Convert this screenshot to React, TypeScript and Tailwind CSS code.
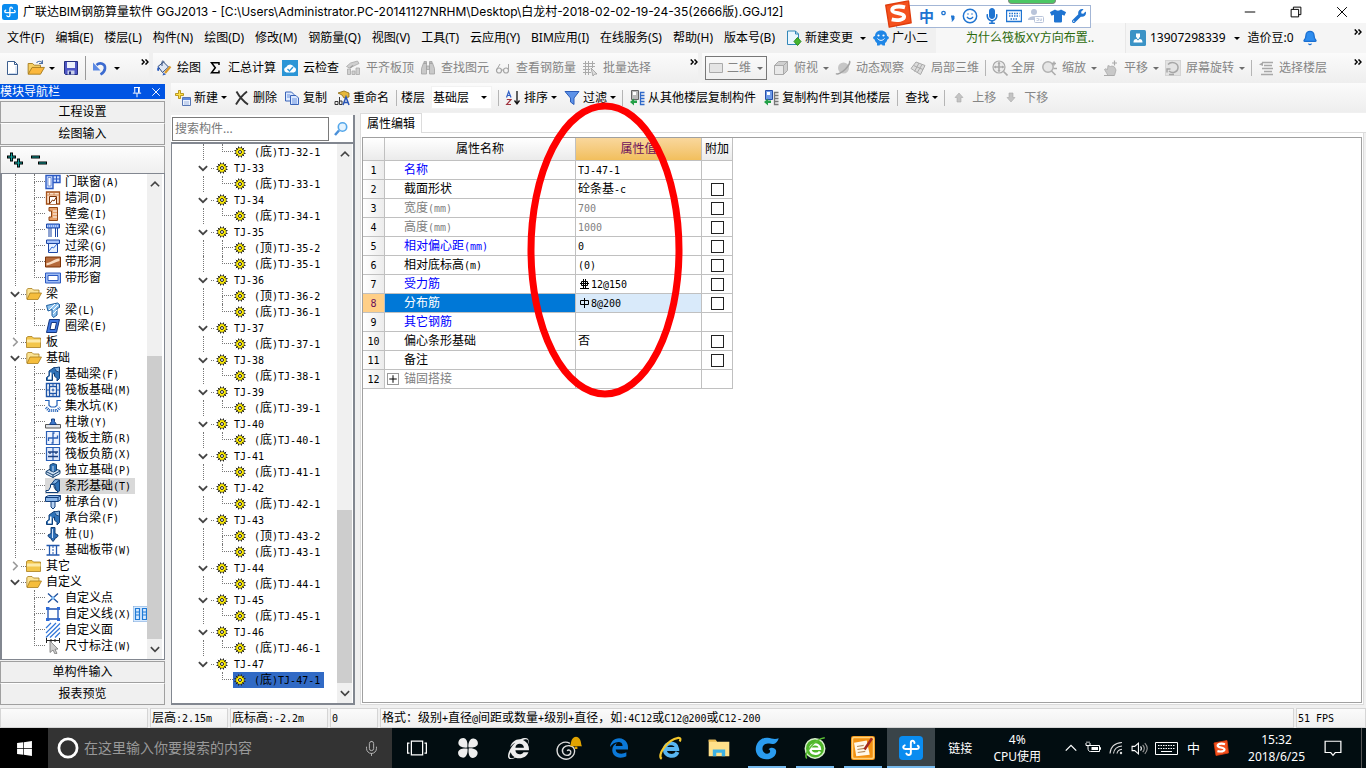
import { Fragment, type ReactNode } from 'react';
import { Bell, Mic, Smile } from 'lucide-react';
import { FaEdgeLegacy, FaInternetExplorer, FaMicrophone, FaTshirt, FaWindows, FaWrench } from 'react-icons/fa';
import clsx from 'clsx';

/* ---------- small drawing helpers ---------- */

const Ico = ({ children, className = 'w-4 h-4' }: { children: ReactNode; className?: string }) => (
  <svg viewBox="0 0 16 16" fill="none" className={clsx('shrink-0', className)} aria-hidden="true">
    {children}
  </svg>
);

const Caret = ({ dim = false }: { dim?: boolean }) => (
  <svg viewBox="0 0 6 3" className="w-1.5 h-[3px] shrink-0" aria-hidden="true">
    <path d="M0 0h6L3 3z" fill={dim ? '#6d6d6d' : '#000'} />
  </svg>
);

const More = () => (
  <svg viewBox="0 0 8 6" className="w-2 h-1.5 shrink-0 mb-3" fill="none" stroke="#000" strokeWidth="1.4" aria-hidden="true">
    <path d="M.7.4 3.2 3 .7 5.6M4.5.4 7 3 4.5 5.6" />
  </svg>
);

const Sep = ({ className = '' }: { className?: string }) => <span className={clsx('w-px h-4 bg-[#b5b5b5] shrink-0', className)} />;

// Latin runs are set half as wide as the Chinese characters
const Mono = ({ text }: { text: string }) => (
  <>
    {text.split(/([\x20-\x7e]+)/).map((part, i) =>
      i % 2 ? (
        <span key={i} className="font-['DejaVu_Sans_Mono',monospace] text-[10px] leading-none whitespace-pre">{part}</span>
      ) : (
        <Fragment key={i}>{part}</Fragment>
      ),
    )}
  </>
);

/* ---------- icons ---------- */

const AppLogo = ({ className }: { className: string }) => (
  <Ico className={className}>
    <rect width="16" height="16" rx="2.5" fill="#0a8cf0" />
    <path d="M10.300 4.600C10.300 2.700 7.900 2.700 7.900 4.600v6.600c0 1.700-2.200 1.900-3 .5M3.800 6.200C2.300 6.700 2.500 8.700 4.200 8.700h7.600c1.700 0 1.800-1.700.7-2.200" stroke="#fff" strokeWidth="1.300" strokeLinecap="round" />
  </Ico>
);

const Sogou = ({ className }: { className: string }) => (
  <Ico className={className}>
    <path d="M1 3 14 .5 15.500 13 3 15.500z" fill="#f4511e" stroke="#e03c0c" strokeWidth=".8" strokeLinejoin="round" />
    <path d="M12 4.200C8 3.100 4.500 3.900 4.700 5.900c.2 2 6.700 1.300 6.800 3.500.1 2-3.700 2.600-7.100 1.700" stroke="#fff" strokeWidth="2.200" />
  </Ico>
);

const icons: Record<string, ReactNode> = {
  newDoc: <><path d="M2.500 1.500h7l3 3v10h-10z" fill="#fff" stroke="#3d5f8f" /><path d="M9.500 1.500v3h3" stroke="#3d5f8f" /><path d="M11 6v8M4 13.500h8" stroke="#c7d7ee" /></>,
  open: <><path d="M1 13V4h4l1.500 1.500H12V8" fill="#f6cf63" stroke="#a67a1c" strokeWidth=".8" /><path d="M1 13.500 4.500 7.500H15.500L12 13.500z" fill="#fbb83e" stroke="#a67a1c" strokeWidth=".8" /><path d="M8.500 3.500C10 1.500 12 1.500 13.500 3.500M13.700 1v3h-3" stroke="#4b6fa5" /></>,
  save: <><path d="M1.500 1.500h13v13h-12l-1-1z" fill="#4f57c5" stroke="#26307f" /><path d="M4 2h8v6H4z" fill="#eef2fb" /><path d="M4.500 10.500h7v4h-7z" fill="#c9d1ea" /><path d="M6 11.500h2v3H6z" fill="#26307f" /></>,
  undo: <><path d="M4.500 5C8 2 13.500 3.500 13 8.500c-.2 2.500-2 4.500-4.500 6" stroke="#3c6bd0" strokeWidth="2.600" /><path d="M1 2.500v8h7.500z" fill="#5c8ae4" /></>,
  paint: <><path d="M2 6.500 7.500 2l5 5-6 5.500z" fill="#dfe7f5" stroke="#2f4a7c" /><path d="M6 6V1.500c1-1 2-.5 2 1" stroke="#2f4a7c" /><path d="M2 7c-1.500 2-.8 4 .2 4s1.500-1.500.5-4" fill="#2f5fc0" /><path d="M14.500 6.500 9 13" stroke="#d99a2a" strokeWidth="2.200" /><path d="m6.500 15.500 1-3 2.500 2z" fill="#2f5fc0" /></>,
  sigma: <path d="M12 5V2.700H4.500L8.300 7.700 4.500 12.800H12V10.500" stroke="#000" strokeWidth="1.500" />,
  cloudCheck: <><rect width="16" height="16" fill="#2b95d6" /><path d="M4.500 12.500a2.800 2.800 0 0 1-.2-5.500 4 4 0 0 1 7.500 0 2.800 2.800 0 0 1 0 5.500z" fill="#fff" /><path d="m5.500 9 2 2 3.500-4" stroke="#2b95d6" strokeWidth="1.400" /></>,
  align: <><path d="m1.500 6.500 4-3.500 7-2L14 3.500 4.500 8zM2.500 9h3v5.500h-3zM7 11h3v3.500H7zM11 8h3.500v6.500H11z" fill="#d0d0d0" stroke="#a8a8a8" strokeWidth=".8" /><path d="M5 8 8 5.500" stroke="#a0a0a0" strokeWidth="1.500" /></>,
  binoculars: <><path d="M1.500 14V8.500L3.500 3h3v11zM9.500 14V3h3l2 5.500V14zM6.500 6h3v3.500h-3zM4 1.500h2.500v2H4zM9.500 1.500H12v2H9.500z" fill="#c9c9c9" stroke="#a2a2a2" strokeWidth=".8" /></>,
  glasses: <><circle cx="4" cy="10.500" r="2.500" stroke="#a4a4a4" strokeWidth="1.200" /><circle cx="11" cy="10.500" r="2.500" stroke="#a4a4a4" strokeWidth="1.200" /><path d="M6.500 10h2M1.500 10 5 4M13.500 10V4" stroke="#a4a4a4" /></>,
  batch: <><path d="M1 3.500h12M1 6.500h12M1 9.500h7M1 12.500h8M3.500 1v14M6.500 1v14M10.500 1v7" stroke="#aaa" /><path d="m9 8 6 6-2.500.2L11 16z" fill="#ddd" stroke="#999" strokeWidth=".8" /></>,
  rect: <path d="M1.500 3.500h13v9h-13z" fill="#e4e4e4" stroke="#aaa" />,
  cube: <><path d="M1.500 5.500h9v9h-9z" fill="#e9e9e9" stroke="#aaa" /><path d="m1.500 5.500 4-4h9l-4 4zM10.500 14.500l4-4v-9l-4 4z" fill="#cfcfcf" stroke="#aaa" /></>,
  orbit: <><circle cx="8.500" cy="8" r="5.500" fill="#c6c6c6" /><path d="M1 13.500c1.500 1.500 6-1 9.500-4.500s5-7 3.800-8" stroke="#a2a2a2" strokeWidth="1.600" /></>,
  part3d: <><path d="m1 8.500 5-6.500 9 3.500-4.500 9z" fill="#dcdcdc" stroke="#aaa" /><path d="m3.500 5.500 9.500 4M9 3l-4.500 8.500M12 4.500l-5 8.500" stroke="#aaa" /></>,
  zoomFit: <><circle cx="7" cy="7" r="6" fill="#ececec" stroke="#aaa" strokeWidth="1.200" /><path d="M7 2.500v9M2.500 7h9M11.500 11.500l4 4" stroke="#aaa" strokeWidth="1.600" /><path d="M7 1.500 8.500 4h-3zM7 12.500 8.500 10h-3zM1.500 7 4 5.500v3zM12.500 7 10 5.500v3z" fill="#aaa" /></>,
  zoom: <><circle cx="7" cy="7" r="5.200" fill="#e6e6e6" stroke="#b1b1b1" strokeWidth="1.500" /><path d="m10.500 11 4 4M13 1.500v4M11 3.500h4M12.500 8.500H16" stroke="#aaa" strokeWidth="1.500" /></>,
  pan: <><path d="M1.500 9.500c1-1.500 2 0 3 0L5 5.500l2.500 1L9 6l2.500 1 1.500 3-1.500 5.500H5z" fill="#c8c8c8" stroke="#aaa" strokeWidth=".8" /><path d="M11.500.5v5M9 3h5M1 15.500h10" stroke="#aaa" strokeWidth="1.200" /></>,
  rotate: <><rect x=".5" y=".5" width="15" height="15" fill="#e3e3e3" stroke="#d4d4d4" /><path d="M3 4.500c3.500-4 10.500-1.500 10 3.500-.5 4.500-6 6-9 3M2 12.500V9h3.500M4 14.500h5" stroke="#a6a6a6" strokeWidth="1.500" /></>,
  floors: <><path d="M4 2.500h11M6 5.500h8M4 8.500h11M6 11.500h8M3 14.500h12" stroke="#a8a8a8" strokeWidth="1.400" /><path d="M1 4.500 5 2v4z" fill="#a8a8a8" /></>,
  create: <><path d="M7.500 7.500h8v8h-8z" fill="#eef4ff" stroke="#5877b5" /><path d="M8 8h7v2H8z" fill="#5f8be0" /><path d="M9 12h5M9 14h5" stroke="#9db3dc" /><path d="M3.500.5h2v3h3v2h-3v3h-2v-3h-3v-2h3z" fill="#ffe04a" stroke="#a98400" strokeWidth=".8" /></>,
  del: <path d="M2.500 1.500C5 6 9 11 14 14.500M13 1.500C8.500 5 5 9.500 2 14.500" stroke="#333" strokeWidth="1.900" />,
  copy: <><path d="M1.500 2h6L10 4.500V11H1.500z" fill="#dce9ff" stroke="#3a64b8" /><path d="M6.500 5.500H12L14.500 8v6.500h-8z" fill="#dce9ff" stroke="#3a64b8" /><path d="M8 9h5M8 11h5M8 13h5M3 5h3M3 7h3" stroke="#6c93de" /></>,
  rename: <><path d="m4 3 6-2 5 2v4l-5 1-2-3z" fill="#e5b73b" stroke="#8b6a12" strokeWidth=".8" /><path d="M1 14.500v-3h3v3H1M5.500 7v7.500h2.500v-3.500H5.500" stroke="#222" strokeWidth=".9" /><path d="m9 15 3-8 3 8M10 12.500h4" stroke="#2955b5" strokeWidth="1.500" /></>,
  funnel: <path d="M1 1.500h14L10 8v6.500L6.500 12V8z" fill="#5d92e8" stroke="#2c5cb8" />,
  sort: <><path d="m1.500 7.500 2.200-6 2.300 6M2.300 5.500h3" stroke="#2f5fc5" strokeWidth="1.200" /><path d="M1.800 9.500H6l-4.300 5H6" stroke="#a1343e" strokeWidth="1.200" /><path d="M12 1v12M9.500 10.500l2.500 3.500 2.500-3.500" stroke="#111" strokeWidth="1.300" /></>,
  copyFrom: <><path d="M2.500.5h7v9h-7z" fill="#bbb" stroke="#666" /><path d="M4 2h3v3H4z" fill="#fff" /><path d="M15.500 2.500h-4v12h4M11.500 5.500h4M11.500 8.500h4M11.500 11.500h4" stroke="#2f69c9" strokeWidth="1.300" /><path d="M8 10.500H5V8.500L1 12l4 3.500V13h3z" fill="#23a047" /></>,
  copyTo: <><path d="M2.500.5h7v9h-7z" fill="#6f9be8" stroke="#2850a8" /><path d="M4 2h3v3H4z" fill="#fff" /><path d="M15.500 2.500h-4v12h4M11.500 5.500h4M11.500 8.500h4M11.500 11.500h4" stroke="#777" strokeWidth="1.300" /><path d="M8 10.500H5V8.500L1 12l4 3.500V13h3z" fill="#23a047" /></>,
  up: <path d="m8 3 4 4.500h-2V12H6V7.500H4z" fill="#c4c4c4" stroke="#aaa" strokeWidth=".6" />,
  down: <path d="m8 12 4-4.500h-2V3H6v4.500H4z" fill="#c4c4c4" stroke="#aaa" strokeWidth=".6" />,
  change: <><path d="M1.500 1h8l3 3v10.500h-11z" fill="#eaf6ff" stroke="#3187b8" /><path d="M9.500 1v3h3" stroke="#3187b8" /><path d="m11.500 7.500 3.500 4-3.500 4-3.500-4z" fill="#46b52f" stroke="#2b8a1c" /></>,
  mascot: <><path d="M8 .5c4 0 6 2.500 6 5.500 2.500.5 2.500 3 .3 3.500-.3 2-1.300 3-2.300 3.500v2.500H9.500l-.5-1H7l-.5 1H4V13c-1-.5-2-1.500-2.300-3.500C-.5 9-.5 6.500 2 6 2 3 4 .5 8 .5z" fill="#1f86e6" /><circle cx="5.500" cy="5.500" r="1.100" fill="#fff" /><circle cx="10.500" cy="5.500" r="1.100" fill="#fff" /><path d="M4.500 8.500c2 2.500 5 2.500 7 0" stroke="#fff" /></>,
  user: <><rect width="16" height="16" rx="1.500" fill="#3b93c6" /><path d="M6 3.500h4v3L8.500 9h-1L6 6.500z" fill="#fff" /><path d="M3.500 12.500c0-3 1.500-3.500 3-3.500L8 10.500 9.500 9c1.500 0 3 .5 3 3.500z" fill="#fff" /></>,

  folder: <><path d="M.5 13.500V3.500L2 2.500h4l1.500 1.500h7v9.500z" fill="#f3c64b" stroke="#a87d1d" strokeWidth=".8" /><path d="M1 5.500h13.500v3H1z" fill="#fdeaa8" /></>,
  folderOpen: <><path d="M.8 13V3.500L2 2.500h4L7.500 4H13v3" fill="#fbe394" stroke="#a87d1d" strokeWidth=".8" /><path d="M1 13.500 4 7h11.500L12 13.500z" fill="#f5bd3c" stroke="#a87d1d" strokeWidth=".8" /></>,
  doorWin: <><path d="M1 1.500h7v13H1zM8 1.500h7v7H8z" fill="#cfe0ff" stroke="#2b59c2" strokeWidth="1.400" /><path d="M3 3.500h3v8.500H3z" fill="#fff" stroke="#2b59c2" strokeWidth=".6" /><path d="M11.500 2v6M8 5h7" stroke="#2b59c2" /></>,
  wallHole: <><path d="M1.500 2h13v12h-13z" fill="#fbe0c8" stroke="#a34e16" strokeWidth="1.300" /><path d="M1.500 5h13M4.500 2v3M9 2v3" stroke="#c9793f" strokeWidth=".8" /><path d="M4.500 14V6.500h7V14" fill="#fff" stroke="#7a3206" /><path d="m4.500 14 3-4 1.500 1 2.500-4" stroke="#7a3206" /></>,
  niche: <><path d="M4 1.500h8.500v13H4V11h2.500V5H4z" fill="#e6a06a" stroke="#8f4413" /><path d="M8 5h4M8 8h4M8 11h4" stroke="#fff" /></>,
  linkBeam: <><path d="M1.500 2h13v4h-13z" fill="#6e9af0" stroke="#1d47a5" /><path d="M4 6v9M6 6v9M10.500 6v9M12.500 6v9" stroke="#1d47a5" /><path d="M2 4h12" stroke="#fff" strokeDasharray="1 1" /></>,
  lintel: <><path d="M1.500 2h13v3.500h-13z" fill="#a7c3fa" stroke="#1d47a5" /><path d="M3.500 5.500h9v9h-9z" fill="#e7f0ff" stroke="#1d47a5" /><path d="m4 13 3-4 1.500 1 3.500-4" stroke="#2f6bd8" /></>,
  bandHole: <><path d="M.5 3h15v10H.5z" fill="#b5693a" stroke="#7a3206" /><path d="M1.500 9C6 8.500 9 5 14.500 4.500V7c-4 1-8 3.500-13 4.500z" fill="#f8dcc2" /></>,
  bandWin: <><path d="M.5 3h15v10H.5z" fill="#9dbcf5" stroke="#2b59c2" /><path d="M3 5.500h10v5H3z" fill="#fff" stroke="#2b59c2" /></>,
  beam: <><path d="M1.500 3.500 12.500 1l2 1.500v3L12 6.500V13l-3.500 2.500-1.500-2V7.500L3 9z" fill="#8ec3ee" stroke="#1c5d9e" /><path d="m4 8 6-6M8 8l5-5M8 12l4-4" stroke="#fff" /></>,
  ring: <><path d="M4.500 1.500h10l-3 13h-10z" fill="#3f78e0" stroke="#12357f" /><path d="M6.500 4.500h5l-1.500 7H5z" fill="#fff" stroke="#12357f" /></>,
  fBeam: <><path d="M1.500 14.500v-3L4 9.500V5l5-3.500 2 .5v3l3.500 1v6.500L12 15v-2.500L9.500 10V7L7.500 8.500v6z" fill="#2e72b8" stroke="#103f78" /><path d="m9 2 5.500-1v5" fill="#7fb0e2" stroke="#103f78" /><path d="M3 13.500v-2l2-1.500V6.500h1.500v7z" fill="#fff" /></>,
  raft: <><path d="M1.500 1.500h13v13h-13zM4.500 4.500h7v7h-7z" stroke="#1e55a8" strokeWidth="1.400" /><path d="M4.500 1.500v3M8 1.500v3M11.500 1.500v3M4.500 11.500v3M8 11.500v3M11.500 11.500v3M1.500 8h3M11.500 8h3M6.500 8h3M8 6.500v3" stroke="#1e55a8" /></>,
  pit: <><path d="M0 2.500h4v5l2 1.500h4l2-1.500v-5h4" stroke="#2160b8" strokeWidth="1.200" /><path d="M1 9.500 4 12.500h8l3-3" stroke="#2160b8" strokeDasharray="1 1" strokeWidth="3" /></>,
  pier: <><path d="M.5 10.500h15V14H.5z" fill="#e2e5ea" stroke="#555" /><path d="m4.500 10.500 2-3V5h3v2.500l2 3z" fill="#3d78cc" stroke="#163f80" /></>,
  raftMain: <><path d="M1.500 1.500h13v13h-13z" fill="#edf3ff" stroke="#2a5fb5" strokeWidth="1.200" /><path d="M9.500 3H8v10H6.500M3.500 11V8h9V5.500" stroke="#2a5fb5" strokeWidth="1.300" /></>,
  raftNeg: <><path d="M1.500 1.500h13v13h-13zM8 1.500v13" fill="#dfe9fb" stroke="#2a5fb5" strokeWidth="1.200" /><path d="M3 6h10M3 10.500h10M5 6v2M11 6v2" stroke="#1b3f80" strokeWidth="1.300" /></>,
  isolated: <><path d="M1 9.500 7 6l8 2.500v3L8 15.500l-7-3.500z" fill="#cfe0f2" stroke="#14406f" /><path d="M1 9.500 8 13l7-4M8 13v2.500" stroke="#14406f" /><path d="M5 3 8 1.500l3.500 1v6L8.500 10 5 8.500z" fill="#2e72b8" stroke="#14406f" /><path d="M8 4v5.500" stroke="#cfe0f2" /></>,
  strip: <><path d="m6.500 6 3.500-4.500 4.500.5-3 4z" fill="#7fb0e2" stroke="#103f78" /><path d="M9.500 6.500 14.500 2v11L12 15z" fill="#2e72b8" stroke="#103f78" /><path d="M1 14.500v-2h2.500L5.500 9V6.500h3.500V9l2 3.500h1.500v2z" fill="#fff" stroke="#103f78" /></>,
  cap: <><path d="m.5 3 3-1.500h12V6l-2.500 1.500H.5z" fill="#8db8ea" stroke="#123f7c" /><path d="M.5 3.500h12.500l2.500-2M13 3.500v4" stroke="#123f7c" /><path d="M6 7.500h4V13l-2 2-2-2z" fill="#b7d2f2" stroke="#123f7c" /></>,
  pile: <><path d="M6 1.500h4v6l3 1.500c0 2-1.500 3-3 3v1l-2 2.500-2-2.500v-1C4.500 12 3 11 3 9l3-1.500z" fill="#2f6fb7" stroke="#133d72" /><path d="M7.500 3v9" stroke="#cfe3fb" /></>,
  slabBand: <><path d="M1.500 3.500h13M1.500 13h13" stroke="#2358ad" strokeWidth="1.500" /><path d="M4.500 4v9M11.500 4v9" stroke="#2358ad" strokeWidth="1.300" /><path d="M8 4v9" stroke="#2358ad" strokeDasharray="2 1" /></>,
  point: <><path d="m3 3.500 10 9M13 3.500l-10 9" stroke="#1d4f9c" strokeWidth="1.300" /><circle cx="8" cy="8" r="1.800" fill="#7db9f5" /></>,
  line: <><path d="M3 3h10v10H3z" stroke="#1c50b0" strokeWidth="1.300" /><path d="M1 1h3.500v3H1zM12 1h3v3h-3zM1 12h3.500v3H1zM12 12h3v3h-3z" fill="#2f6bd6" /></>,
  area: <path d="m1 6 5-5M1 11 11 1M1 15.500 15 1.500M5 15.500 15 6M10 15.500l5-5" stroke="#3276d8" strokeWidth="1.200" />,
  dim: <><path d="M1.500 0v5M14.500 0v5M1.500 2.500h13M6 1v3M10 1v3" stroke="#222" /><path d="m5 3 8 8-3 .3 2 4-2 .7-2-4-3 2.500z" fill="#ccc" stroke="#777" strokeWidth=".8" /></>,
};

const Icon = ({ name, className }: { name: string; className?: string }) => <Ico className={className}>{icons[name]}</Ico>;

const Gear = () => (
  <svg viewBox="0 0 12 12" className="w-3 h-3 shrink-0" aria-hidden="true">
    <path d="M4.500.5v11M7.500.5v11M.5 4.500h11M.5 7.500h11M1.900 1.900l8.200 8.200M10.100 1.900l-8.200 8.200" stroke="#222" strokeWidth="1" />
    <circle cx="6" cy="6" r="4.300" fill="#ffee00" stroke="#333" strokeWidth=".7" />
    <path d="M3 3h1v1H3zM8 3h1v1H8zM3 8h1v1H3zM8 8h1v1H8z" fill="#4d4700" />
    <circle cx="6" cy="6" r="1.500" fill="#fff" stroke="#222" strokeWidth="1" />
  </svg>
);

/* ---------- window chrome ---------- */

const menus = ['文件(F)', '编辑(E)', '楼层(L)', '构件(N)', '绘图(D)', '修改(M)', '钢筋量(Q)', '视图(V)', '工具(T)', '云应用(Y)', 'BIM应用(I)', '在线服务(S)', '帮助(H)', '版本号(B)'];

const TitleBar = () => (
  <header className="flex items-center h-[23px] bg-white pl-0.5 pr-[18px] shrink-0">
    <AppLogo className="w-4 h-4" />
    <h1 className="ml-[5px] flex-1 truncate font-['Inter','Noto_Sans_CJK_SC',sans-serif]">
      广联达BIM钢筋算量软件 GGJ2013 - [C:\Users\Administrator.PC-20141127NRHM\Desktop\白龙村-2018-02-02-19-24-35(2666版).GGJ12]
    </h1>
    <div className="flex items-center gap-[34px]">
      <button aria-label="最小化"><Ico className="w-3 h-3"><path d="M1 8h14" stroke="#000" strokeWidth="1.300" /></Ico></button>
      <button aria-label="还原"><Ico className="w-3 h-3"><path d="M1.500 4.500h10v10h-10zM4.500 4.500v-3h10v10h-3" stroke="#000" strokeWidth="1.300" /></Ico></button>
      <button aria-label="关闭"><Ico className="w-3 h-3"><path d="m1.500 1.500 13 13M14.500 1.500l-13 13" stroke="#000" strokeWidth="1.300" /></Ico></button>
    </div>
  </header>
);

const ImeBar = () => (
  <div className="absolute left-[884px] top-0 flex items-center">
    <span className="absolute left-[124px] top-0 w-12 h-1 rounded-b bg-[#4cc764] border border-t-0 border-[#7b8a7d]" />
    <Sogou className="w-7 h-7 relative z-10" />
    <div className="flex items-center gap-1.5 h-[23px] mt-1 -ml-4 pl-[22px] pr-1 bg-white border border-[#a3b6d6] text-[#1f74d1]">
      <span className="text-[15px] leading-none font-bold">中</span>
      <Ico className="w-4 h-4"><circle cx="3.500" cy="5" r="1.700" stroke="#1f74d1" strokeWidth="1.300" /><path d="M11 8h3v3l-2 2.500" fill="#1f74d1" stroke="#1f74d1" /></Ico>
      <Smile size={16} strokeWidth={2.200} />
      <FaMicrophone size={16} />
      <Ico className="w-4 h-4"><path d="M.5 2.500h15v11H.5z" stroke="#1f74d1" strokeWidth="1.400" /><path d="M3 5.500h10.500M3 8h10.500M4.500 11h7" stroke="#1f74d1" strokeWidth="1.400" strokeDasharray="1.500 1" /></Ico>
      <Ico className="w-4 h-4"><circle cx="6" cy="4" r="3" fill="#b9c4da" /><path d="M0 12c0-5 12-5 12 0z" fill="#b9c4da" /><rect x="6.500" y="8.500" width="9" height="6" rx="1" fill="#fff" stroke="#b9c4da" /><path d="M8.500 10.500h2v2h-2M12 10.500v2h1.500v-2" stroke="#b9c4da" strokeWidth=".8" /></Ico>
      <FaTshirt size={16} />
      <FaWrench size={14} />
    </div>
  </div>
);

const MenuBar = () => (
  <nav className="flex items-stretch h-[30px] shrink-0 bg-[#f0f0f0]">
    <div className="flex items-center gap-[11px] pl-[7px] w-[936px] whitespace-nowrap">
      {menus.map(m => <button key={m}>{m}</button>)}
      <button className="flex items-center gap-[3px]">
        <Icon name="change" />新建变更<span className="ml-1"><Caret /></span>
      </button>
      <button className="flex items-center gap-[3px] -ml-1"><Icon name="mascot" />广小二</button>
    </div>
    <div className="flex items-center flex-1 bg-[#f7f7f7] pl-[30px] min-w-0">
      <a href="#tip" className="text-[#2c6a0c] whitespace-nowrap">为什么筏板XY方向布置..</a>
    </div>
    <div className="flex items-center bg-[#f5f5f5] border-l border-[#e8e8e8] pl-1 pr-1 w-[241px] gap-1">
      <button className="flex items-center gap-1"><Icon name="user" />13907298339<span className="ml-1 mr-1"><Caret /></span></button>
      <button>造价豆:0</button>
      <button aria-label="消息"><Bell size={16} className="ml-1 fill-[#2e8def] text-[#1b6fd0]" /></button>
      <button className="ml-auto" aria-label="更多"><More /></button>
    </div>
  </nav>
);

type Tool = { icon: string; label: string; dim?: boolean; caret?: boolean; tight?: boolean };

const ToolButton = ({ icon, label, dim, caret, tight }: Tool) => (
  <button className={clsx('flex items-center whitespace-nowrap', tight ? 'gap-[3px]' : 'gap-[5px]', dim && 'text-[#858585]')}>
    <Icon name={icon} />
    {label}
    {caret && <Caret dim={dim} />}
  </button>
);

const strip = 'flex items-center bg-linear-to-b from-[#fbfbfb] to-[#eeeeee]';

const MainToolbar = () => (
  <div className="flex h-[30px] shrink-0 bg-[#f0f0f0] gap-1">
    <div className={clsx(strip, 'w-[149px] pl-[5px] gap-1.5')}>
      <button aria-label="新建"><Icon name="newDoc" /></button>
      <button aria-label="打开" className="flex items-center gap-1"><Icon name="open" className="w-[18px] h-[18px]" /><Caret /></button>
      <button aria-label="保存" className="ml-0.5"><Icon name="save" /></button>
      <span className="w-px h-6 bg-[#999]" />
      <button aria-label="撤销" className="flex items-center gap-1.5"><Icon name="undo" /><Caret /></button>
      <button className="ml-auto" aria-label="更多"><More /></button>
    </div>
    <div className={clsx(strip, 'w-[545px] pl-[3px] gap-1.5')}>
      <ToolButton icon="paint" label="绘图" />
      <ToolButton icon="sigma" label="汇总计算" />
      <ToolButton icon="cloudCheck" label="云检查" />
      <ToolButton icon="align" label="平齐板顶" dim />
      <ToolButton icon="binoculars" label="查找图元" dim />
      <ToolButton icon="glasses" label="查看钢筋量" dim />
      <ToolButton icon="batch" label="批量选择" dim />
      <button className="ml-auto" aria-label="更多"><More /></button>
    </div>
    <div className={clsx(strip, 'flex-1 pl-[3px] pr-1 gap-1.5')}>
      <label className="flex items-center w-[62px] h-6 border border-[#777] pl-0.5 gap-[3px] pr-[3px] text-[#858585]">
        <Icon name="rect" />
        <select aria-label="视图模式" className="appearance-none w-[30px] bg-transparent outline-none"><option>二维</option></select>
        <Caret dim />
      </label>
      <ToolButton icon="cube" label="俯视" dim caret />
      <ToolButton icon="orbit" label="动态观察" dim />
      <ToolButton icon="part3d" label="局部三维" dim />
      <Sep />
      <ToolButton icon="zoomFit" label="全屏" dim tight />
      <ToolButton icon="zoom" label="缩放" dim caret />
      <ToolButton icon="pan" label="平移" dim caret />
      <ToolButton icon="rotate" label="屏幕旋转" dim caret />
      <Sep />
      <ToolButton icon="floors" label="选择楼层" dim />
      <button className="ml-auto" aria-label="更多"><More /></button>
    </div>
  </div>
);

const ComponentToolbar = () => (
  <div className={clsx(strip, 'h-[29px] shrink-0 pl-1 gap-[7px]')}>
    <ToolButton icon="create" label="新建" caret tight />
    <ToolButton icon="del" label="删除" tight />
    <ToolButton icon="copy" label="复制" tight />
    <ToolButton icon="rename" label="重命名" tight />
    <label className="flex items-center gap-1">
      <Sep />
      楼层
      <span className="flex items-center w-[61px] h-[23px] bg-white border border-[#f2f2f2] pl-px pr-1 ml-0.5">
        <select className="appearance-none flex-1 bg-transparent outline-none"><option>基础层</option></select>
        <Caret />
      </span>
    </label>
    <Sep className="-mx-px" />
    <ToolButton icon="sort" label="排序" caret tight />
    <ToolButton icon="funnel" label="过滤" caret tight />
    <Sep className="-mx-px" />
    <ToolButton icon="copyFrom" label="从其他楼层复制构件" tight />
    <ToolButton icon="copyTo" label="复制构件到其他楼层" tight />
    <Sep />
    <button className="flex items-center gap-[3px]">查找<Caret /></button>
    <Sep className="-mx-px" />
    <ToolButton icon="up" label="上移" dim />
    <ToolButton icon="down" label="下移" dim />
  </div>
);

/* ---------- trees ---------- */

const Chevron = ({ open, className = '' }: { open: boolean; className?: string }) => (
  <Ico className={clsx('w-3 h-3', className)}>
    {open ? <path d="m2.500 5.500 5.500 5.500 5.500-5.500" stroke="#444" strokeWidth="2.400" /> : <path d="m5.500 2.500 5.500 5.500-5.500 5.500" stroke="#999" strokeWidth="2" />}
  </Ico>
);

const Elbow = ({ last }: { last: boolean }) => (
  <span className="w-[11px] h-4 shrink-0 flex flex-col">
    <span className="h-2 border-l border-b border-dotted border-[#777]" />
    <span className={clsx('h-2', !last && 'border-l border-dotted border-[#777]')} />
  </span>
);

const ScrollBar = ({ thumb }: { thumb: ReactNode }) => (
  <div className="w-[15px] shrink-0 bg-[#f0f0f0] flex flex-col items-center">
    <Ico className="w-3 h-4 my-0.5"><path d="m2.500 11 5.500-5.500 5.500 5.500" stroke="#444" strokeWidth="2.200" /></Ico>
    {thumb}
    <Ico className="w-3 h-4 my-0.5"><path d="m2.500 5.500 5.500 5.500 5.500-5.500" stroke="#444" strokeWidth="2.200" /></Ico>
  </div>
);

type NavNode = { label: string; icon: string; level: 0 | 1; open?: boolean; last?: boolean; tail?: boolean };

const navNodes: NavNode[] = [
  { label: '门联窗(A)', icon: 'doorWin', level: 1 },
  { label: '墙洞(D)', icon: 'wallHole', level: 1 },
  { label: '壁龛(I)', icon: 'niche', level: 1 },
  { label: '连梁(G)', icon: 'linkBeam', level: 1 },
  { label: '过梁(G)', icon: 'lintel', level: 1 },
  { label: '带形洞', icon: 'bandHole', level: 1 },
  { label: '带形窗', icon: 'bandWin', level: 1, last: true },
  { label: '梁', icon: 'folderOpen', level: 0, open: true },
  { label: '梁(L)', icon: 'beam', level: 1 },
  { label: '圈梁(E)', icon: 'ring', level: 1, last: true },
  { label: '板', icon: 'folder', level: 0 },
  { label: '基础', icon: 'folderOpen', level: 0, open: true },
  { label: '基础梁(F)', icon: 'fBeam', level: 1 },
  { label: '筏板基础(M)', icon: 'raft', level: 1 },
  { label: '集水坑(K)', icon: 'pit', level: 1 },
  { label: '柱墩(Y)', icon: 'pier', level: 1 },
  { label: '筏板主筋(R)', icon: 'raftMain', level: 1 },
  { label: '筏板负筋(X)', icon: 'raftNeg', level: 1 },
  { label: '独立基础(P)', icon: 'isolated', level: 1 },
  { label: '条形基础(T)', icon: 'strip', level: 1 },
  { label: '桩承台(V)', icon: 'cap', level: 1 },
  { label: '承台梁(F)', icon: 'fBeam', level: 1 },
  { label: '桩(U)', icon: 'pile', level: 1 },
  { label: '基础板带(W)', icon: 'slabBand', level: 1, last: true },
  { label: '其它', icon: 'folder', level: 0 },
  { label: '自定义', icon: 'folderOpen', level: 0, open: true },
  { label: '自定义点', icon: 'point', level: 1, tail: true },
  { label: '自定义线(X)', icon: 'line', level: 1, tail: true },
  { label: '自定义面', icon: 'area', level: 1, tail: true },
  { label: '尺寸标注(W)', icon: 'dim', level: 1, tail: true, last: true },
];

const NavRow = ({ node }: { node: NavNode }) => {
  if (node.level === 0) {
    return (
      <li className="flex items-center h-4 pl-1.5">
        <Chevron open={!!node.open} />
        <span className="w-[5px] border-t border-dotted border-[#777]" />
        <Icon name={node.icon} />
        <span className="ml-1"><Mono text={node.label} /></span>
      </li>
    );
  }
  return (
    <li className="flex items-center h-4 pl-3">
      <span className={clsx('w-[19px] h-4 shrink-0', !node.tail && 'border-l border-dotted border-[#777]')} />
      <Elbow last={!!node.last} />
      <span className={clsx('flex items-center h-4 pr-1', node.label === '条形基础(T)' && 'bg-[#d9d9d9]')}>
        <Icon name={node.icon} />
        <span className="ml-1 whitespace-nowrap"><Mono text={node.label} /></span>
      </span>
      {node.label === '自定义线(X)' && (
        <Ico className="w-4 h-4 -ml-0.5"><rect width="16" height="16" fill="#d7eaff" stroke="#7da7d8" /><path d="M2.500 2.500h4v11h-4zM9.500 2.500h4v11h-4zM2.500 6h4M2.500 9h4M9.500 6h4M9.500 9h4" stroke="#1f7ad6" strokeWidth="1.200" /></Ico>
      )}
    </li>
  );
};

const panelButton = 'h-[22px] w-full bg-[#f0f0f0] border border-[#a0a0a0] shrink-0';

const NavPanel = () => (
  <aside className="w-[165px] shrink-0 flex flex-col">
    <div className="flex items-center h-[15px] bg-[#0054e3] text-white shrink-0 mt-px">
      <h2 className="flex-1 leading-none">模块导航栏</h2>
      <button aria-label="固定"><Ico className="w-3 h-3"><path d="M4 2h8M5 2v7M10 2v7M11 2v7M2.500 9.500h11M8 9.500V15" stroke="#fff" strokeWidth="1.300" /></Ico></button>
      <button aria-label="关闭" className="mx-1 ml-2"><Ico className="w-2.5 h-2.5"><path d="m2 2 12 12M14 2 2 14" stroke="#fff" strokeWidth="1.500" /></Ico></button>
    </div>
    <button className={clsx(panelButton, 'mt-0.5')}>工程设置</button>
    <button className={clsx(panelButton, 'border-t-white')}>绘图输入</button>
    <div className="flex items-center gap-2 h-[27px] pl-1.5 mt-px bg-linear-to-b from-[#fdfdfd] to-[#efefef] border border-b-0 border-[#a0a0a0] shrink-0">
      <button aria-label="全部展开"><Ico><path d="M4.500.5v9M0 5h9M11.500 6.500v9M7 11h9" stroke="#000" strokeWidth="3" /><path d="M4.500 1.500v7M1 5h7M11.500 7.500v7M8 11h7" stroke="#13a3a0" strokeWidth="1.200" /></Ico></button>
      <button aria-label="全部折叠"><Ico><path d="M0 5h9M7 11h9" stroke="#000" strokeWidth="3" /><path d="M1 5h7M8 11h7" stroke="#13a3a0" strokeWidth="1.200" /></Ico></button>
    </div>
    <div className="flex flex-1 min-h-0 bg-white border border-l-2 border-[#828790] pl-px pr-0.5">
      <ul className="flex-1 overflow-hidden min-w-0">
        {navNodes.map((n, i) => <NavRow key={i} node={n} />)}
      </ul>
      <ScrollBar thumb={<><span className="flex-4 w-full" /><span className="flex-7 w-full bg-[#cdcdcd]" /></>} />
    </div>
    <button className={clsx(panelButton, 'mt-px')}>单构件输入</button>
    <button className={clsx(panelButton, 'mb-0.5 border-t-white')}>报表预览</button>
  </aside>
);

// numbered beams; some have a top part as well as a bottom one
const groups = Array.from({ length: 15 }, (_, i) => {
  const id = 33 + i;
  const double = id === 35 || id === 36 || id === 43;
  return { id, parts: double ? [`(顶)TJ-${id}-2`, `(底)TJ-${id}-1`] : [`(底)TJ-${id}-1`] };
});

const PartRow = ({ label, last, tail, selected }: { label: string; last: boolean; tail?: boolean; selected?: boolean }) => (
  <li className="flex items-center h-4 pl-[31px]">
    <span className={clsx('w-[19px] h-4 shrink-0', !tail && 'border-l border-dotted border-[#777]')} />
    <Elbow last={last} />
    <span className={clsx('flex items-center h-4 pl-px pr-1', selected && 'bg-[#316ac5]')}>
      <Gear />
      <span className="ml-2 whitespace-nowrap"><Mono text={label} /></span>
    </span>
  </li>
);

const ComponentPanel = () => (
  <section className="w-[184px] shrink-0 flex flex-col border-r-2 border-[#828790] my-[3px] mb-0.5">
    <div className="flex h-[27px] bg-white items-center pl-px pt-px shrink-0">
      <input type="text" aria-label="搜索构件" placeholder="搜索构件..." className="w-[157px] h-6 border border-[#7a7a7a] pl-0.5 pb-0.5 outline-none placeholder:text-[#777]" />
      <button aria-label="搜索" className="ml-1">
        <Ico><path d="m2 14 4-4.500" stroke="#4a90d9" strokeWidth="2.500" /><circle cx="9.500" cy="6" r="4.200" fill="#e3f3ff" stroke="#55a7ea" strokeWidth="1.600" /></Ico>
      </button>
    </div>
    <div className="flex flex-1 min-h-0 bg-white border-t-2 border-b-2 border-l border-[#828790]">
      <ul className="flex-1 overflow-hidden">
        <PartRow label="(底)TJ-32-1" last />
        {groups.map(g => (
          <Fragment key={g.id}>
            <li className="flex items-center h-4 pl-[25px]">
              <Chevron open />
              <span className="w-[3px] ml-0.5 mr-0.5 border-t border-dotted border-[#777]" />
              <Gear />
              <span className="ml-1.5"><Mono text={`TJ-${g.id}`} /></span>
            </li>
            {g.parts.map((p, i) => (
              <PartRow key={p} label={p} last={i === g.parts.length - 1} tail={g.id === 47} selected={g.id === 47} />
            ))}
          </Fragment>
        ))}
      </ul>
      <ScrollBar thumb={<><span className="flex-2 w-full" /><span className="flex-1 w-full bg-[#cdcdcd]" /></>} />
      <span className="w-px" />
    </div>
  </section>
);

/* ---------- property editor ---------- */

type Prop = { name: string; value?: string; grade?: 'A' | 'C'; tone?: 'blue' | 'gray'; check?: boolean; expand?: boolean };

const props: Prop[] = [
  { name: '名称', value: 'TJ-47-1', tone: 'blue' },
  { name: '截面形状', value: '砼条基-c', check: true },
  { name: '宽度(mm)', value: '700', tone: 'gray', check: true },
  { name: '高度(mm)', value: '1000', tone: 'gray', check: true },
  { name: '相对偏心距(mm)', value: '0', tone: 'blue', check: true },
  { name: '相对底标高(m)', value: '(0)', check: true },
  { name: '受力筋', value: '12@150', grade: 'C', tone: 'blue', check: true },
  { name: '分布筋', value: '8@200', grade: 'A', check: true },
  { name: '其它钢筋', tone: 'blue' },
  { name: '偏心条形基础', value: '否', check: true },
  { name: '备注', check: true },
  { name: '锚固搭接', tone: 'gray', expand: true },
];

// steel grade mark in front of the diameter
const Grade = ({ grade }: { grade: 'A' | 'C' }) => (
  <svg viewBox="0 0 11 10" className="inline w-[11px] h-2.5 mx-px align-[-1px]" fill="none" stroke="#000" aria-hidden="true">
    {grade === 'A' ? (
      <path d="M5.500 0v10M1.500 2.500h8v4h-8z" />
    ) : (
      <path d="M4.500 0v9M6.500 0v9M2.500 2.500h6v4h-6zM1 9.500h9M1 4.500h9" />
    )}
  </svg>
);

const headCell = 'h-[23px] font-normal border-r border-b border-[#c0c0c0]';

const PropertyEditor = () => (
  <main className="flex-1 min-w-0 flex flex-col ml-[5px] pt-px">
    <div role="tablist" className="flex h-5 shrink-0 bg-white">
      <button role="tab" aria-selected="true" className="w-[62px] bg-white border border-b-0 border-[#dcdcdc]">属性编辑</button>
      <span className="flex-1 border-b border-[#dcdcdc]" />
    </div>
    <div className="flex-1 min-h-0 bg-white border border-t-0 border-[#dcdcdc] p-px pt-[4px] mr-0.5 mb-0.5">
      <div className="h-full border border-[#a0a0a0]">
        <table className="table-fixed border-separate border-spacing-0 w-[370px]">
          <colgroup>
            <col className="w-[22px]" />
            <col className="w-[191px]" />
            <col className="w-[126px]" />
            <col className="w-[31px]" />
          </colgroup>
          <thead>
            <tr>
              <th className={clsx(headCell, 'bg-linear-to-b from-white to-[#ebebeb]')} />
              <th className={clsx(headCell, 'bg-linear-to-b from-white to-[#ebebeb]')}>属性名称</th>
              <th className={clsx(headCell, 'bg-linear-to-b from-[#f9d79c] to-[#f2bf5c] text-[#6b0f5b]')}>属性值</th>
              <th className={clsx(headCell, 'bg-linear-to-b from-white to-[#ebebeb] whitespace-nowrap')}>附加</th>
            </tr>
          </thead>
          <tbody>
            {props.map((p, i) => {
              const active = p.name === '分布筋';
              return (
                <tr key={p.name} className="leading-[18px]">
                  <th className={clsx('h-[19px] p-0 font-normal border-r border-b border-[#c0c0c0]', active ? 'bg-[#ffcf87] text-[#6b0f5b]' : 'bg-linear-to-r from-white to-[#ececec]')}>
                    <Mono text={String(i + 1)} />
                  </th>
                  <td className={clsx('p-0 border-r border-b border-[#c0c0c0]', active && 'bg-[#0078d7] text-white', p.tone === 'blue' && 'text-[#0000ff]', p.tone === 'gray' && 'text-[#808080]')}>
                    <span className="flex items-center">
                      <span className="w-[19px] flex pl-0.5">
                        {p.expand && (
                          <button aria-label="展开" className="w-3 h-3 border border-[#999] flex items-center justify-center">
                            <Ico className="w-2.5 h-2.5"><path d="M8 2v12M2 8h12" stroke="#000" strokeWidth="1.600" /></Ico>
                          </button>
                        )}
                      </span>
                      <span><Mono text={p.name} /></span>
                    </span>
                  </td>
                  <td className={clsx('p-0 pl-0.5 border-r border-b border-[#c0c0c0]', active && 'bg-[#d9eafa]', p.tone === 'gray' && 'text-[#808080]')}>
                    {p.grade && <Grade grade={p.grade} />}
                    <Mono text={p.value ?? ''} />
                  </td>
                  <td className="p-0 border-r border-b border-[#c0c0c0]">
                    {p.check && <input type="checkbox" aria-label={`${p.name} 附加`} className="appearance-none block mx-auto size-[13px] border border-[#222] bg-white" />}
                  </td>
                </tr>
              );
            })}
          </tbody>
        </table>
      </div>
    </div>
  </main>
);

/* ---------- bottom bars ---------- */

const statusCell = 'border border-[#d5d5d5] bg-linear-to-b from-[#fbfbfb] to-[#f0f0f0] px-px leading-[18px] whitespace-nowrap overflow-hidden';

const StatusBar = () => (
  <footer className="flex h-[21px] pt-px shrink-0 gap-0.5">
    <span className={clsx(statusCell, 'w-[148px]')} />
    <span className={clsx(statusCell, 'w-[78px]')}><Mono text="层高:2.15m" /></span>
    <span className={clsx(statusCell, 'w-[98px]')}><Mono text="底标高:-2.2m" /></span>
    <span className={clsx(statusCell, 'w-12')}><Mono text="0" /></span>
    <span className={clsx(statusCell, 'flex-1')}><Mono text="格式：级别+直径@间距或数量+级别+直径，如:4C12或C12@200或C12-200" /></span>
    <span className={clsx(statusCell, 'w-[70px]')}><Mono text="51 FPS" /></span>
  </footer>
);

const pinned: { label: string; icon: ReactNode }[] = [
  { label: '任务视图', icon: <Ico className="w-5 h-5"><path d="M3.500 2.500h9v11h-9zM2 4H.5v8H2M14 4h1.500v8H14" stroke="#fff" /></Ico> },
  { label: '快捷应用', icon: <Ico className="w-[22px] h-[22px]"><path d="M7.500 7.700C8 4 7 .8 4.500.8S1 3 1 4.500s2 3.500 6.500 3.200zM8.300 7.500C12 8 15.200 7 15.200 4.500S13 1 11.500 1 8 3 8.300 7.500zM8.500 8.300C8 12 9 15.200 11.500 15.200S15 13 15 11.500 13 8 8.500 8.300zM7.700 8.500C4 8 .8 9 .8 11.500S3 15 4.500 15 8 13 7.700 8.500z" fill="#eee" /></Ico> },
  { label: '浏览器', icon: <FaInternetExplorer size={21} color="#ededed" /> },
  { label: '提醒', icon: <Ico className="w-7 h-7"><path d="M8.500 5.300C5 3.500 1 6 1.200 9.700c.3 4 5 6 8 3.700 3-2.300 2.500-6.200-.7-6.700-3-.5-5 2-4 4 1 2 4 2 4.500 0 .3-1.500-1.500-2-2-1" stroke="#ddd" strokeWidth=".8" /><path d="M8.500 7c1-1 0-5 3.500-5.500C15.500 2 14.500 6 15.500 7zM11.200 7.300h1.600v1.200h-1.600z" fill="#e2a400" /></Ico> },
  { label: 'Edge', icon: <FaEdgeLegacy size={20} color="#0b78d8" /> },
  { label: 'Internet Explorer', icon: <Ico className="w-6 h-6"><path d="M13 10.700C11.500 14.500 4.800 14 4.500 9 4.300 4 12.300 3.300 12.800 8.700H5.500" stroke="#58b6f2" strokeWidth="2.600" /><path d="M2.500 15.200C-1 13 6 2.500 13.500 1.200c1.500-.2 1.800 1 1 2.500" stroke="#f3c62c" strokeWidth="1.500" /></Ico> },
];

const running: { label: string; icon: ReactNode; open?: boolean; active?: boolean }[] = [
  { label: '文件资源管理器', icon: <Ico className="w-[22px] h-[22px]"><path d="M.5 2h5l1 1.500h9v10.500H.5z" fill="#ffe08a" /><path d="M.5 2h5l1 1.500H.5z" fill="#e9b84e" /><path d="M3.500 14V9h9v5h-2.500v-2.500h-4V14z" fill="#3db1e3" /></Ico> },
  { label: '广联达', open: true, icon: <Ico className="w-6 h-6"><path d="M15.800 1.500C14.500 6 11.500 5.500 9.500 5 6 4.500 4.800 7 5 9c.3 2.500 3 3.500 4.500 2.300 1-.8.7-2.300-.5-2.500 1-1.500 4.300-1.500 5 .7.7 3-2 6-6.500 6C3 15.500.3 12 .5 8.500.8 4 4.500.8 8.500 1.200c2.500.3 4.500 1.300 7.300.3z" fill="#2a9cf0" /></Ico> },
  { label: '360浏览器', open: true, icon: <Ico className="w-6 h-6"><circle cx="8" cy="8.300" r="6.500" fill="#4fb52a" stroke="#d8f0cc" /><path d="M11.300 10.300c-1.300 2.500-6.300 2-6.500-1.700C4.700 4.700 11 4.500 11.300 8.500H5" stroke="#fff" strokeWidth="1.600" /><path d="M2.500 15C0 12 8 2 14.500 1.200" stroke="#5cc236" /></Ico> },
  { label: '记事', open: true, icon: <Ico className="w-6 h-6"><rect width="16" height="16" rx="1.500" fill="#f29111" /><rect x="1" y="1" width="14" height="14" rx="1" stroke="#ffd27a" /><path d="M2 4.500 10.500 3l2 9.500-9 1z" fill="#fff8e8" /><path d="M4 7l4.500-.7M4.300 9l4.500-.7M4.500 11l5-.7" stroke="#b58a5a" strokeWidth=".8" /><path d="m14 1.500-5 7.500" stroke="#a3281e" strokeWidth="1.700" /></Ico> },
  { label: '钢筋算量', open: true, active: true, icon: <AppLogo className="w-6 h-6" /> },
];

const TaskBar = () => (
  <div className="flex h-10 shrink-0 bg-[#020d11] text-white">
    <button aria-label="开始" className="w-12 bg-black flex items-center justify-center"><FaWindows size={17} /></button>
    <label className="flex items-center w-[344px] bg-[#333] pl-[9px] pr-3">
      <Ico className="w-[22px] h-[22px]"><circle cx="8" cy="8" r="6.600" stroke="#fff" strokeWidth="2" /></Ico>
      <input type="text" placeholder="在这里输入你要搜索的内容" aria-label="搜索" className="ml-[5px] flex-1 min-w-0 bg-transparent outline-none text-sm placeholder:text-[#999]" />
      <Mic size={17} strokeWidth={1.300} className="text-[#bbb]" />
    </label>
    <div className="grid grid-cols-6 w-[303px]">
      {pinned.map(p => <button key={p.label} aria-label={p.label} className="flex items-center justify-center">{p.icon}</button>)}
    </div>
    <div className="flex">
      {running.map(r => (
        <button key={r.label} aria-label={r.label} className={clsx('w-12 flex flex-col items-center', r.active && 'bg-[#3a4449]')}>
          <span className="flex-1 flex items-center pt-0.5">{r.icon}</span>
          <span className={clsx('h-0.5', r.active ? 'w-12' : 'w-[38px]', r.open && 'bg-[#76b9ed]')} />
        </button>
      ))}
    </div>
    <div className="flex flex-1 items-center justify-end gap-[7px] leading-[17px] whitespace-nowrap">
      <button className="mr-3.5">链接</button>
      <span className="text-center mr-4">4%<br />CPU使用</span>
      <Ico className="w-3.5 h-3.5"><path d="m2 11 6-6 6 6" stroke="#fff" strokeWidth="1.500" /></Ico>
      <Ico className="w-4 h-4"><path d="M3 5.500h11.500v6H5.500M14.500 7.500h1v2h-1" stroke="#fff" /><path d="M6.500 7h6.500v3H6.500z" fill="#fff" /><path d="M1 3v2.500h4V3M2 3V1.500M4 3V1.500M3 5.500V8c0 2 .5 3.500 2.500 3.500" stroke="#fff" /></Ico>
      <Ico className="w-4 h-4"><path d="M2 13.500C2.500 7 7 3 14 2.500M5.500 13.500C6 9 9 6.500 14 6M9 13.500c.3-2.500 2-4 5-4.300" stroke="#ddd" strokeWidth="1.100" /><circle cx="13" cy="13" r="1.200" fill="#ddd" /></Ico>
      <Ico className="w-[17px] h-[17px]"><path d="M1 6h2.500L7 3v10l-3.500-3H1z" stroke="#fff" /><path d="M9 6c1 1.300 1 2.700 0 4" stroke="#fff" /><path d="M11 4.500c2 2.300 2 4.700 0 7M13 3c3 3.300 3 6.700 0 10" stroke="#999" /></Ico>
      <svg viewBox="0 0 23 13" className="w-[23px] h-[13px] shrink-0" fill="none" stroke="#fff" aria-hidden="true"><path d="M.5.5h22v12H.5z" /><path d="M3 3.500h17M3 6.500h17" strokeDasharray="1.500 1" /><path d="M6 9.500h11" /></svg>
      <span className="text-[13px] mx-0.5">中</span>
      <span className="mx-1"><Sogou className="w-4 h-4" /></span>
      <time className="text-center ml-2 mr-3">15:32<br />2018/6/25</time>
      <button aria-label="通知"><Ico className="w-[18px] h-[18px]"><path d="M1 2h14v10h-5l-2 2.500L6 12H1z" stroke="#fff" strokeWidth="1.100" /></Ico></button>
      <span className="w-px h-10 bg-[#555] ml-3 mr-1" />
    </div>
  </div>
);

export default function App() {
  return (
    <div className="relative h-screen flex flex-col overflow-hidden bg-[#f0f0f0] text-black text-[12px] leading-4 font-['Noto_Sans','Noto_Sans_CJK_SC',sans-serif]">
      <TitleBar />
      <MenuBar />
      <MainToolbar />
      <div className="flex flex-1 min-h-0">
        <NavPanel />
        <div className="flex flex-col flex-1 min-w-0 ml-1.5">
          <ComponentToolbar />
          <div className="flex flex-1 min-h-0">
            <ComponentPanel />
            <PropertyEditor />
          </div>
        </div>
      </div>
      <StatusBar />
      <TaskBar />
      <ImeBar />
      {/* hand-drawn mark round the value column */}
      <svg viewBox="0 0 156 296" className="absolute left-[527px] top-[102px] w-[156px] h-[296px] pointer-events-none" fill="none" aria-hidden="true">
        <ellipse cx="78" cy="148" rx="74" ry="144" stroke="#ff0000" strokeWidth="7" />
      </svg>
    </div>
  );
}
